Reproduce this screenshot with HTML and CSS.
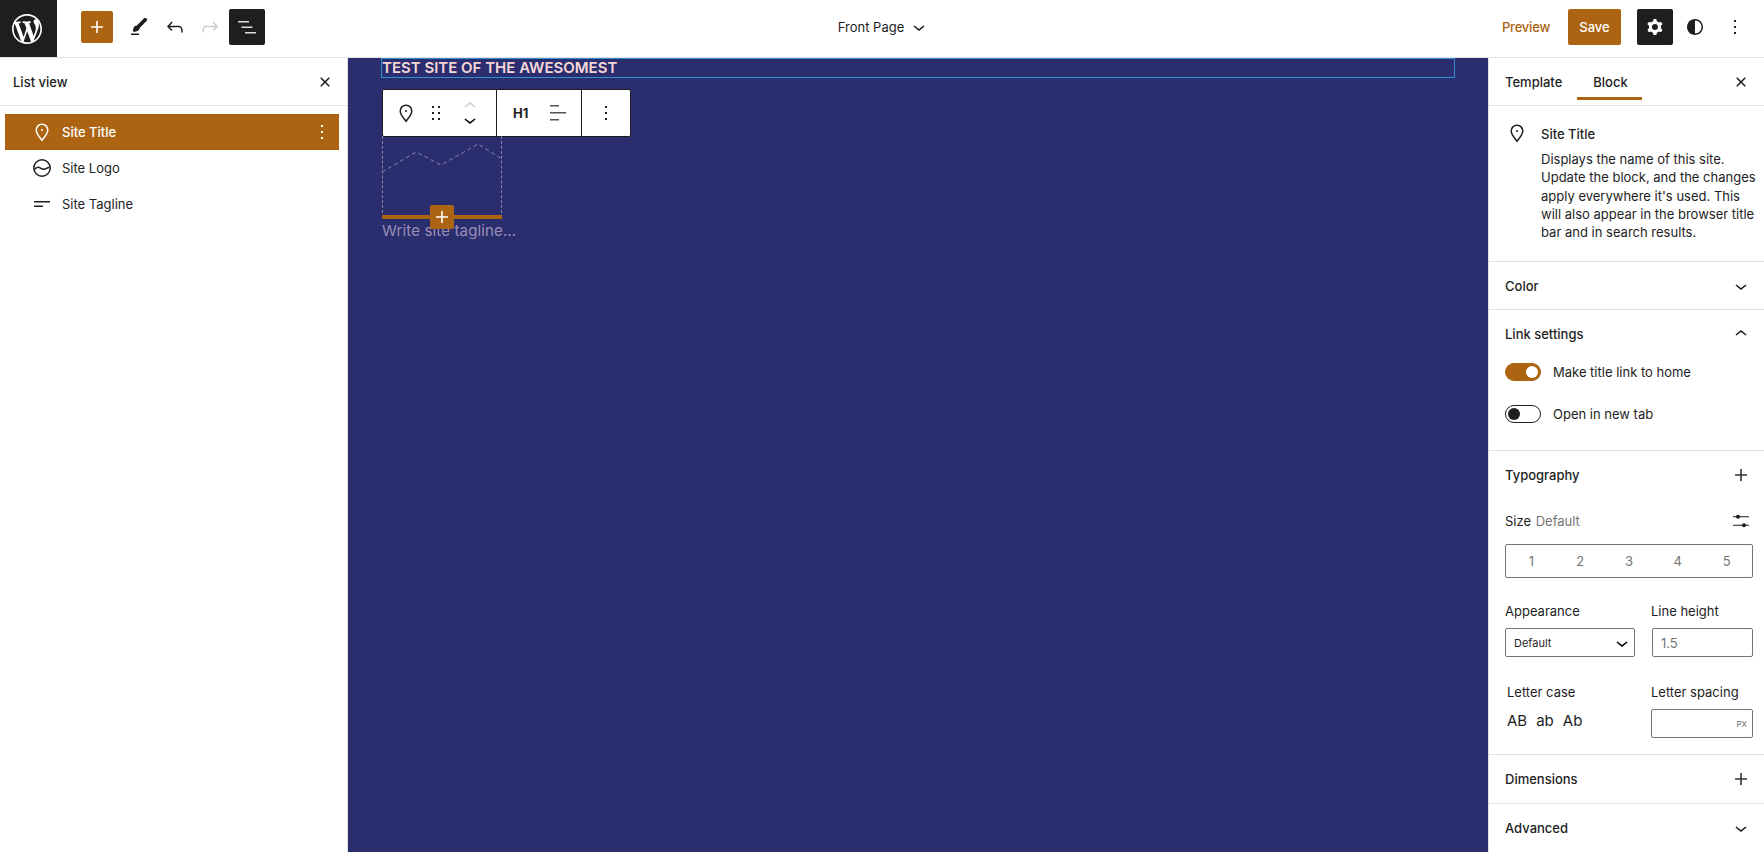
FILE: index.html
```html
<!DOCTYPE html>
<html lang="en">
<head>
<meta charset="utf-8">
<title>Front Page</title>
<link rel="stylesheet" href="styles.css">
</head>
<body>
<header class="topbar">
  <div class="topbar-left">
    <a class="wp-logo"><svg viewBox="-2 -2 24 24" width="36" height="36"><path fill="#fff" d="M20 10c0-5.51-4.49-10-10-10C4.48 0 0 4.49 0 10c0 5.52 4.48 10 10 10 5.51 0 10-4.48 10-10zM7.78 15.37L4.37 6.22c.55-.02 1.17-.08 1.17-.08.5-.06.44-1.13-.06-1.11 0 0-1.45.11-2.37.11-.18 0-.37 0-.58-.01C4.12 2.69 6.87 1.11 10 1.11c2.33 0 4.45.87 6.05 2.34-.68-.11-1.65.39-1.65 1.58 0 .74.45 1.36.9 2.1.35.61.55 1.36.55 2.46 0 1.49-1.4 5-1.4 5l-3.03-8.37c.54-.02.82-.17.82-.17.5-.05.44-1.25-.06-1.22 0 0-1.44.12-2.38.12-.87 0-2.33-.12-2.33-.12-.5-.03-.56 1.2-.06 1.22l.92.08 1.26 3.41zM17.41 10c.24-.64.74-1.87.43-4.25.7 1.29 1.05 2.71 1.05 4.25 0 3.29-1.73 6.24-4.4 7.78.97-2.59 1.94-5.2 2.92-7.78zM6.1 18.09C3.12 16.65 1.11 13.53 1.11 10c0-1.3.23-2.48.72-3.59C3.25 10.3 4.67 14.2 6.1 18.09zm4.03-6.63l2.58 6.98c-.86.29-1.76.45-2.71.45-.79 0-1.57-.11-2.29-.33.81-2.38 1.62-4.74 2.42-7.1z"/></svg></a>
    <div class="tools">
      <button class="add-btn"><svg class="ic" viewBox="0 0 24 24"><path fill="#fff" d="M18 11.2h-5.2V6h-1.6v5.2H6v1.6h5.2V18h1.6v-5.2H18z"/></svg></button>
      <span class="tool pencil"><svg class="ic" viewBox="0 0 24 24"><path d="M4 20h8v-1.5H4V20zM18.9 3.5c-.6-.6-1.5-.6-2.1 0l-7.2 7.2c-.4-.1-.7 0-1.1.1-.5.2-1.5.7-1.9 2.2-.3 1-.6 1.8-.7 2.4L6.6 17l1.3-.3c.6-.1 1.4-.4 2.4-.7 1.5-.4 2-1.4 2.2-1.9.1-.4.2-.7.1-1.1l7.2-7.2c.6-.6.6-1.5 0-2.1l-.9-.7z"/></svg></span>
      <span class="tool undo"><svg class="ic" viewBox="0 0 24 24"><path d="M18.3 11.7c-.6-.6-1.4-.9-2.3-.9H6.7l2.9-3.3-1.1-1-4.5 5L8.5 16l1-1-2.7-2.7H16c.5 0 .9.2 1.3.5 1 1 1 3.4 1 4.5v.3h1.5v-.2c0-1.5 0-4.3-1.5-5.7z"/></svg></span>
      <span class="tool redo"><svg class="ic" viewBox="0 0 24 24"><path fill="#ccc" d="M15.6 6.5l-1.1 1 2.9 3.3H8c-.9 0-1.7.3-2.3.9-1.4 1.5-1.4 4.2-1.4 5.6v.2h1.5v-.3c0-1.1 0-3.5 1-4.5.3-.3.7-.5 1.3-.5h9.2L14.5 15l1.1 1.1 4.6-4.6-4.6-5z"/></svg></span>
      <button class="dark-btn"><svg class="ic" viewBox="0 0 24 24"><path fill="#ddd" d="M3 6h11v1.5H3V6zm3.5 5.5h11V13h-11v-1.5zM21 17H10v1.5h11V17z"/></svg></button>
    </div>
  </div>
  <div class="doc-title"><span>Front Page</span><svg class="ic" viewBox="0 0 24 24"><path d="M17.5 11.6L12 16l-5.5-4.4.9-1.2L12 14l4.5-3.6 1 1.2z"/></svg></div>
  <div class="topbar-right">
    <span class="preview">Preview</span>
    <button class="save">Save</button>
    <button class="dark-btn gear"><svg class="ic" viewBox="0 0 24 24"><path fill="#fff" fill-rule="evenodd" d="M10.289 4.836A1 1 0 0111.275 4h1.306a1 1 0 01.987.836l.244 1.466c.787.26 1.503.679 2.108 1.218l1.393-.522a1 1 0 011.216.437l.653 1.13a1 1 0 01-.23 1.273l-1.148.944a6.025 6.025 0 010 2.435l1.149.946a1 1 0 01.23 1.272l-.653 1.13a1 1 0 01-1.216.437l-1.394-.522c-.605.54-1.32.958-2.108 1.218l-.244 1.466a1 1 0 01-.987.836h-1.306a1 1 0 01-.986-.836l-.244-1.466a5.995 5.995 0 01-2.108-1.218l-1.394.522a1 1 0 01-1.217-.436l-.653-1.131a1 1 0 01.23-1.272l1.149-.946a6.026 6.026 0 010-2.435l-1.148-.944a1 1 0 01-.23-1.272l.653-1.131a1 1 0 011.217-.437l1.393.522a5.994 5.994 0 012.108-1.218l.244-1.466zM14.929 12a3 3 0 11-6 0 3 3 0 016 0z"/></svg></button>
    <span class="tool styles-ic"><svg class="ic" viewBox="0 0 24 24"><path fill-rule="evenodd" d="M12 4c-4.4 0-8 3.6-8 8s3.6 8 8 8 8-3.6 8-8-3.6-8-8-8zm0 14.5c3.6 0 6.5-2.9 6.5-6.5S15.6 5.5 12 5.5v13z"/></svg></span>
    <span class="tool more-ic"><svg class="ic" viewBox="0 0 24 24"><path d="M13 19h-2v-2h2v2zm0-6h-2v-2h2v2zm0-6h-2V5h2v2z"/></svg></span>
  </div>
</header>

<main class="app">
  <aside class="listview">
    <div class="lv-head"><h2>List view</h2><svg class="ic" viewBox="0 0 24 24"><path d="M12 13.06l3.712 3.713 1.061-1.06L13.061 12l3.712-3.712-1.06-1.06L12 10.938 8.288 7.227l-1.061 1.06L10.939 12l-3.712 3.712 1.06 1.061L12 13.061z"/></svg></div>
    <ul class="lv-rows">
      <li class="lv-row selected">
        <svg class="ic" viewBox="0 0 24 24"><path fill="none" stroke="#fff" stroke-width="1.5" d="M12 20.2C9 16.4 6.2 13.6 6.2 10a5.8 5.8 0 0 1 11.6 0c0 3.6-2.8 6.4-5.8 10.2z"/><circle cx="12" cy="10" r="1" fill="#fff"/></svg>
        <span>Site Title</span>
        <svg class="ic lv-more" viewBox="0 0 24 24"><path fill="#fff" d="M13 19h-2v-2h2v2zm0-6h-2v-2h2v2zm0-6h-2V5h2v2z"/></svg>
      </li>
      <li class="lv-row">
        <svg class="ic" viewBox="0 0 24 24"><circle cx="12" cy="12" r="8.2" fill="none" stroke="#1e1e1e" stroke-width="1.5"/><path fill="none" stroke="#1e1e1e" stroke-width="1.5" d="M4.5 13.5c2-2.8 4-2.8 6-1.4s4 1.4 6 .2 2.5-1 3-.6"/></svg>
        <span>Site Logo</span>
      </li>
      <li class="lv-row">
        <svg class="ic" viewBox="0 0 24 24"><path d="M4 10.5h16V9H4v1.5ZM4 15h9v-1.5H4V15Z"/></svg>
        <span>Site Tagline</span>
      </li>
    </ul>
  </aside>

  <section class="canvas">
    <h1 class="site-title">TEST SITE OF THE AWESOMEST</h1>
    <div class="block-toolbar">
      <div class="tb-group tb-first">
        <svg class="ic" viewBox="0 0 24 24"><path fill="none" stroke="#1e1e1e" stroke-width="1.5" d="M12 20.2C9 16.4 6.2 13.6 6.2 10a5.8 5.8 0 0 1 11.6 0c0 3.6-2.8 6.4-5.8 10.2z"/><circle cx="12" cy="10" r="1" fill="#1e1e1e"/></svg>
        <svg class="ic" viewBox="0 0 24 24"><path d="M8 7h2V5H8v2zm0 6h2v-2H8v2zm0 6h2v-2H8v2zm6-14v2h2V5h-2zm0 8h2v-2h-2v2zm0 6h2v-2h-2v2z"/></svg>
        <span class="movers">
          <svg viewBox="0 4 24 16" width="24" height="16"><path fill="#ccc" d="M6.5 12.4L12 8l5.5 4.4-.9 1.2L12 10l-4.5 3.6-1-1.2z"/></svg>
          <svg viewBox="0 4 24 16" width="24" height="16"><path d="M17.5 11.6L12 16l-5.5-4.4.9-1.2L12 14l4.5-3.6 1 1.2z"/></svg>
        </span>
      </div>
      <div class="tb-group tb-second">
        <b>H1</b>
        <svg class="ic" viewBox="0 0 24 24"><path fill="#555" d="M13 5.5H4V4h9v1.5Zm7 7H4V11h16v1.5Zm-7 7H4V18h9v1.5Z"/></svg>
      </div>
      <div class="tb-group tb-third">
        <svg class="ic" viewBox="0 0 24 24"><path d="M13 19h-2v-2h2v2zm0-6h-2v-2h2v2zm0-6h-2V5h2v2z"/></svg>
      </div>
    </div>
    <div class="logo-placeholder">
      <svg class="zigzag" viewBox="0 0 120 82" width="120" height="82"><path fill="none" stroke="#8a83a6" stroke-dasharray="4 3" d="M0 36 34 16 59 29 96 8 120 23"/></svg>
      <span class="insert-bar"></span>
      <button class="insert-btn"><svg viewBox="0 0 24 24" width="24" height="24"><path fill="#fff" d="M18 11.2h-5.2V6h-1.6v5.2H6v1.6h5.2V18h1.6v-5.2H18z"/></svg></button>
    </div>
    <p class="tagline">Write site tagline…</p>
  </section>

  <aside class="sidebar">
    <div class="tabs">
      <span class="tab">Template</span>
      <span class="tab active">Block</span>
      <svg class="ic tabs-close" viewBox="0 0 24 24"><path d="M12 13.06l3.712 3.713 1.061-1.06L13.061 12l3.712-3.712-1.06-1.06L12 10.938 8.288 7.227l-1.061 1.06L10.939 12l-3.712 3.712 1.06 1.061L12 13.061z"/></svg>
    </div>
    <section class="card">
      <svg class="ic" viewBox="0 0 24 24"><path fill="none" stroke="#1e1e1e" stroke-width="1.5" d="M12 20.2C9 16.4 6.2 13.6 6.2 10a5.8 5.8 0 0 1 11.6 0c0 3.6-2.8 6.4-5.8 10.2z"/><circle cx="12" cy="10" r="1" fill="#1e1e1e"/></svg>
      <div class="card-body">
        <h3>Site Title</h3>
        <p>Displays the name of this site. Update the block, and the changes apply everywhere it's used. This will also appear in the browser title bar and in search results.</p>
      </div>
    </section>
    <section class="panel panel-color">
      <div class="panel-head"><h3>Color</h3><svg class="ic" viewBox="0 0 24 24"><path d="M17.5 11.6L12 16l-5.5-4.4.9-1.2L12 14l4.5-3.6 1 1.2z"/></svg></div>
    </section>
    <section class="panel panel-link">
      <div class="panel-head"><h3>Link settings</h3><svg class="ic" viewBox="0 0 24 24"><path d="M6.5 12.4L12 8l5.5 4.4-.9 1.2L12 10l-4.5 3.6-1-1.2z"/></svg></div>
      <div class="toggle-row first"><span class="toggle on"></span><span>Make title link to home</span></div>
      <div class="toggle-row"><span class="toggle"></span><span>Open in new tab</span></div>
    </section>
    <section class="panel panel-type">
      <div class="panel-head"><h3>Typography</h3><svg class="ic" viewBox="0 0 24 24"><path fill="#333" d="M18 11.2h-5.2V6h-1.6v5.2H6v1.6h5.2V18h1.6v-5.2H18z"/></svg></div>
      <div class="size-head"><span>Size <em>Default</em></span>
        <svg class="ic" viewBox="0 0 24 24"><path d="M4 7.3h16v1H4zM4 15.8h16v1H4z"/><circle cx="9" cy="7.8" r="2"/><circle cx="15" cy="16.3" r="2"/></svg>
      </div>
      <div class="sizes"><span>1</span><span>2</span><span>3</span><span>4</span><span>5</span></div>
      <div class="type-grid">
        <div class="field appearance"><label>Appearance</label>
          <div class="select"><span>Default</span><svg viewBox="0 0 24 24" width="24" height="24"><path d="M17.5 11.6L12 16l-5.5-4.4.9-1.2L12 14l4.5-3.6 1 1.2z"/></svg></div>
        </div>
        <div class="field lineheight"><label>Line height</label><div class="input lh">1.5</div></div>
        <div class="field lettercase"><label>Letter case</label>
          <div class="cases"><span>AB</span><span>ab</span><span>Ab</span></div>
        </div>
        <div class="field letterspacing"><label>Letter spacing</label><div class="input ls"><small>PX</small></div></div>
      </div>
    </section>
    <section class="panel panel-dim">
      <div class="panel-head"><h3>Dimensions</h3><svg class="ic" viewBox="0 0 24 24"><path fill="#333" d="M18 11.2h-5.2V6h-1.6v5.2H6v1.6h5.2V18h1.6v-5.2H18z"/></svg></div>
    </section>
    <section class="panel panel-adv">
      <div class="panel-head"><h3>Advanced</h3><svg class="ic" viewBox="0 0 24 24"><path d="M17.5 11.6L12 16l-5.5-4.4.9-1.2L12 14l4.5-3.6 1 1.2z"/></svg></div>
    </section>
  </aside>
</main>
</body>
</html>
```

FILE: styles.css
```css
* { box-sizing: border-box; }
html, body { margin: 0; height: 852px; overflow: hidden; }
body { font-family: Inter, "Liberation Sans", sans-serif; font-size: 13px; color: #1e1e1e; background: #fff; }
h1, h2, h3, p, ul { margin: 0; padding: 0; }
button { border: 0; padding: 0; font: inherit; }
.ic { width: 24px; height: 24px; display: block; flex: none; fill: #1e1e1e; }

.topbar { height: 58px; border-bottom: 1px solid #e0e0e0; display: grid; grid-template-columns: 1fr auto 1fr; align-items: center; }
.topbar-left { display: flex; align-items: center; height: 57px; }
.wp-logo { width: 57px; height: 57px; padding-right: 3px; background: #1e1e1e; display: flex; align-items: center; justify-content: center; }
.tools { display: flex; align-items: center; margin-left: 24px; margin-top: -3px; }
.add-btn { width: 32px; height: 32px; border-radius: 2px; background: #ad6412; display: flex; align-items: center; justify-content: center; }
.tool { display: flex; align-items: center; justify-content: center; width: 36px; height: 36px; }
.pencil { margin-left: 8px; }
.redo { margin-left: -1px; }
.dark-btn { width: 36px; height: 36px; border-radius: 2px; background: #1e1e1e; display: flex; align-items: center; justify-content: center; }
.tools .dark-btn { margin-left: 1px; }

.doc-title { display: flex; align-items: center; gap: 3px; margin-top: -3px; padding-left: 5px; }
.topbar-right { display: flex; align-items: center; justify-content: flex-end; margin-top: -3px; padding-right: 11px; }
.preview { color: #ad6412; font-weight: 500; letter-spacing: -.2px; }
.save { width: 53px; height: 36px; border-radius: 2px; background: #ad6412; color: #fff; font-weight: 500; margin-left: 18px; }
.gear { margin-left: 16px; }
.styles-ic { margin-left: 4px; }
.more-ic { margin-left: 4px; }

.app { display: grid; grid-template-columns: 348px 1fr 276px; height: 794px; }

.listview { border-right: 1px solid #e0e0e0; }
.lv-head { height: 48px; border-bottom: 1px solid #e0e0e0; padding: 0 10px 0 13px; display: flex; align-items: center; justify-content: space-between; }
.lv-head h2 { font-size: 13px; font-weight: 500; }
.lv-rows { list-style: none; padding: 8px 8px 0 5px; }
.lv-row { height: 36px; display: flex; align-items: center; gap: 8px; padding-left: 25px; color: #1e1e1e; }
.lv-row.selected { background: #ad6412; color: #fff; font-weight: 500; }
.lv-row .lv-more { margin-left: auto; margin-right: 5px; }

.canvas { background: #2a2e6e; position: relative; padding: 0 33px 0 34px; overflow: hidden; }
.site-title { height: 20px; margin-left: -1px; border: 1px solid #3390d0; font-size: 15px; line-height: 18px; font-weight: 600; color: #f6d7d7; }
.block-toolbar { position: absolute; left: 34px; top: 31px; height: 48px; width: 249px; display: flex; background: #fff; border: 1px solid #1e1e1e; border-radius: 2px; }
.tb-group { display: flex; align-items: center; height: 100%; }
.tb-first { width: 114px; border-right: 1px solid #1e1e1e; padding-left: 11px; }
.tb-first > svg:nth-child(2) { margin-left: 6px; }
.movers { display: flex; flex-direction: column; margin-left: 10px; }
.movers svg { display: block; }
.movers svg:first-child { margin-bottom: -2px; }
.tb-second { width: 85px; border-right: 1px solid #1e1e1e; padding-left: 16px; }
.tb-second b { font-size: 13px; font-weight: 700; }
.tb-second svg { margin-left: 18px; }
.tb-third { flex: 1; padding-left: 12px; }
.logo-placeholder { position: relative; width: 120px; height: 82px; margin-top: 58px; border-left: 1px dashed #8a83a6; border-right: 1px dashed #8a83a6; }
.zigzag { position: absolute; left: -1px; top: 0; }
.insert-bar { position: absolute; left: -1px; right: -1px; bottom: -1px; height: 4px; background: #ad6412; }
.insert-btn { position: absolute; left: 47px; bottom: -11px; width: 24px; height: 24px; border-radius: 2px; background: #ad6412; display: block; }
.tagline { font-size: 15px; line-height: 24px; color: #9a8fb6; margin-top: 1px; letter-spacing: .01em; }

.sidebar { border-left: 1px solid #e0e0e0; overflow: hidden; }
.tabs { height: 48px; border-bottom: 1px solid #e0e0e0; position: relative; display: flex; align-items: center; padding-left: 16px; }
.tab { font-weight: 500; }
.tab.active { margin-left: 31px; position: relative; }
.tab.active::after { content: ""; position: absolute; left: -16px; right: -14px; top: 23px; height: 3px; background: #ad6412; }
.tabs-close { margin-left: auto; margin-right: 11px; }
.card { height: 156px; border-bottom: 1px solid #e0e0e0; padding: 15px 0 0 16px; display: flex; gap: 12px; }
.card h3 { font-size: 13px; font-weight: 500; line-height: 24px; margin-top: 1px; }
.card p { font-size: 13px; line-height: 18.3px; margin-top: 4px; width: 222px; }
.panel { border-bottom: 1px solid #e0e0e0; padding: 0 11px 0 16px; }
.panel-head { height: 48px; display: flex; align-items: center; justify-content: space-between; }
.panel-head h3 { font-size: 13px; font-weight: 500; }
.panel-color { height: 48px; }
.panel-link { height: 141px; }
.toggle-row { display: flex; align-items: center; gap: 12px; height: 18px; margin-top: 24px; }
.toggle-row.first { margin-top: 5px; }
.toggle { width: 36px; height: 18px; border-radius: 9px; border: 1px solid #1e1e1e; position: relative; flex: none; }
.toggle::after { content: ""; position: absolute; left: 2px; top: 2px; width: 12px; height: 12px; border-radius: 50%; background: #1e1e1e; }
.toggle.on { background: #ad6412; border-color: #ad6412; }
.toggle.on::after { left: auto; right: 2px; background: #fff; }
.panel-type { height: 304px; }
.size-head { display: flex; align-items: center; justify-content: space-between; margin-top: 10px; height: 24px; }
.size-head em { font-style: normal; color: #757575; margin-left: 1px; }
.sizes { width: 248px; height: 34px; margin-top: 11px; border: 1px solid #757575; border-radius: 2px; display: flex; justify-content: space-around; align-items: center; color: #757575; padding: 0 1px; }
.sizes span { width: 48px; text-align: center; }
.type-grid { display: grid; grid-template-columns: 146px 102px; grid-template-rows: 81px 60px; margin-top: 25px; }
.field label { display: block; line-height: 16px; margin-bottom: 9px; }
.select { width: 130px; height: 29px; border: 1px solid #757575; border-radius: 2px; display: flex; align-items: center; justify-content: space-between; padding: 0 0 0 8px; font-size: 11px; }
.input { height: 29px; border: 1px solid #757575; border-radius: 2px; display: flex; align-items: center; padding-left: 8px; color: #757575; }
.lh { margin-left: 1px; width: 101px; }
.ls { width: 102px; justify-content: flex-end; padding-right: 5px; }
.ls small { font-size: 8px; color: #666; }
.lettercase { padding-left: 2px; }
.cases { display: flex; gap: 9px; font-size: 15px; margin-top: 1px; line-height: 24px; color: #1e1e1e; }
.panel-dim { height: 49px; }
.panel-adv { border-bottom: 0; }
```
